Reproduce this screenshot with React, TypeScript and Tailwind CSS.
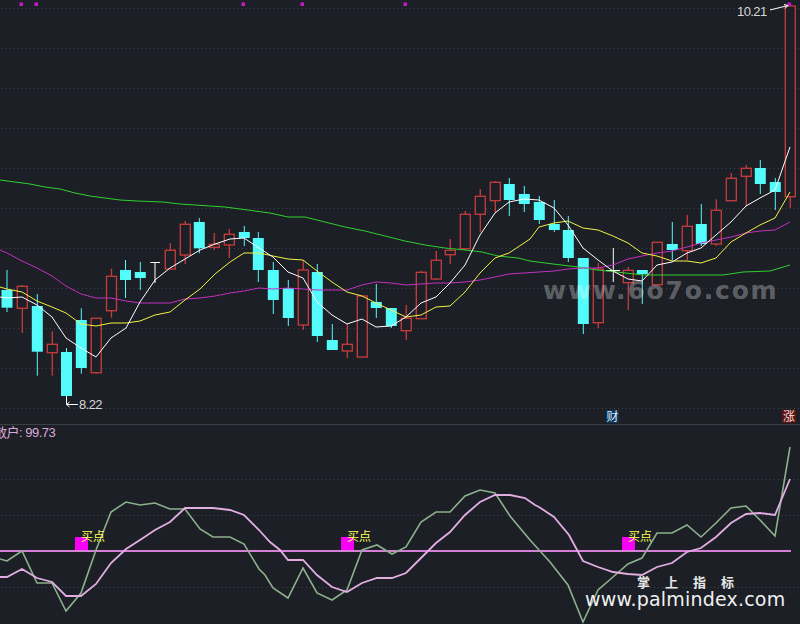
import React from "react";

type Candle = [number, number, number, number, number, "r" | "c"];

const candles: Candle[] = [
  [7, 270, 290, 307.7, 312, "c"],
  [22.3, 285, 286.3, 308.3, 333, "r"],
  [37.3, 294, 306, 351.7, 375.7, "c"],
  [52.3, 331.3, 344.3, 352.7, 375.7, "r"],
  [66.5, 348, 352, 396, 404, "c"],
  [81.3, 308.3, 320, 368, 373.7, "c"],
  [96.2, 318.3, 318.3, 372.7, 373.7, "r"],
  [111.5, 268.7, 276.3, 310.7, 317.7, "r"],
  [125.5, 260, 270, 280, 298, "c"],
  [140.3, 262, 272, 278, 290, "c"],
  [170.3, 243, 250.3, 269, 269, "r"],
  [185.3, 221, 224.3, 255, 264, "r"],
  [199.3, 218, 222, 248.3, 253.3, "c"],
  [214.3, 233, 244.3, 247.3, 250, "r"],
  [229.3, 229, 234.3, 245, 258, "r"],
  [244.3, 226, 232, 238, 246, "c"],
  [258.3, 232, 238, 270, 282, "c"],
  [273.3, 262, 270, 300, 314, "c"],
  [288.3, 280, 288, 318, 326, "c"],
  [303.3, 260, 270, 325, 330, "r"],
  [317.3, 264, 272, 336, 342, "c"],
  [332.3, 324, 340, 350, 350, "c"],
  [347.3, 324, 344.3, 351, 358, "r"],
  [362.3, 296, 296, 357, 357, "r"],
  [376.3, 284, 302, 308, 318, "c"],
  [391.3, 308, 308, 326, 328, "c"],
  [406.3, 305, 318.3, 330.7, 340, "r"],
  [421.3, 271, 272.3, 318.7, 319, "r"],
  [436.3, 251, 260.3, 279, 280, "r"],
  [450.3, 239, 250.3, 254.7, 264, "r"],
  [465.3, 211, 214.3, 248.7, 250, "r"],
  [480.3, 189, 196.3, 214.3, 232, "r"],
  [495.3, 181, 182.3, 200.7, 212, "r"],
  [509.3, 178, 184, 200, 216, "c"],
  [524.3, 186, 194, 204, 212, "c"],
  [539.3, 196, 202, 220, 224, "c"],
  [554.3, 200, 224, 230, 232, "c"],
  [568.3, 216, 230, 258, 262, "c"],
  [583.3, 258, 258, 324, 334, "c"],
  [598.3, 263, 269, 322.7, 328, "r"],
  [628.3, 267, 270.3, 282.7, 310, "r"],
  [642.3, 270, 270, 274, 304, "c"],
  [657.3, 242, 242.3, 284.7, 285, "r"],
  [672.3, 222, 244, 250, 260, "c"],
  [687.3, 215, 226.3, 250.7, 260, "r"],
  [701.3, 204, 224, 244, 246, "c"],
  [716.3, 199.3, 210.3, 244, 246, "r"],
  [731.3, 173, 178.3, 200.7, 201, "r"],
  [746.3, 165, 168.3, 176.3, 206, "r"],
  [760.3, 160, 168, 184, 194, "c"],
  [775.3, 178, 182, 192, 210, "c"],
  [790.3, 5, 6, 196.7, 208, "r"],
];

const white =
  "0,297 7,298 22,297 37,305 52,317 66,338 81,348 96,357 111,338 126,328 140,302 155,280 170,268 185,259 200,250 215,244 230,239 244,238 259,248 273,257 288,272 303,278 317,302 332,315 347,324 362,319 376,327 391,326 406,317 421,303 436,297 450,283 465,265 480,235 495,213 509,202 524,199 539,200 554,208 568,225 583,248 598,260 613,271 628,279 642,281 657,265 672,262 687,253 701,248 716,235 731,222 746,206 760,198 775,190 790,147";
const yellow =
  "0,287 7,289 22,292 37,301 52,307 66,313 81,324 96,326 111,323 126,323 140,321 155,315 170,312 185,300 200,289 215,274 230,262 244,253 259,253 273,256 288,259 303,260 317,271 332,282 347,292 362,296 376,303 391,310 406,317 421,315 436,307 450,306 465,292 480,273 495,258 509,253 524,243 530,239 539,227 554,223 568,221 583,228 598,230 613,236 628,243 642,253 657,256 672,261 687,261 701,263 716,258 731,242 746,233 760,225 775,218 790,192";
const magenta =
  "0,250 7,253 22,261 37,268 52,276 66,286 81,294 96,298 111,298 126,301 140,303 155,303 170,303 185,299 200,298 215,296 230,293 244,291 259,288 273,289 288,288 303,289 317,290 332,290 347,290 362,285 376,282 391,283 406,285 421,284 436,283 450,283 465,282 480,280 495,277 509,274 524,273 539,272 554,271 568,269 583,268 598,268 613,265 628,259 642,256 657,253 672,251 687,247 701,243 716,240 731,237 746,233 760,231 775,230 790,222";
const green =
  "0,180 15,182 30,184 45,187 60,189 75,193 90,196 105,198 120,200 137,201 163,202 180,204 195,205 210,206 225,207 240,209 255,211 270,213 288,217 305,217 325,222 345,227 365,231 385,236 405,241 425,245 445,248 465,250 482,252 498,256 518,258 530,261 553,264 578,267 597,270 617,272 643,275 673,275 697,275 723,275 743,272 770,271 790,265";

const oscGreen =
  "0,559 7,561 22,551 37,583 52,583 66,611 81,593 96,550 111,512 126,502 140,505 155,503 170,509 185,509 200,529 213,537 230,537 244,544 259,569 265,575 273,588 288,598 303,568 317,593 332,600 347,590 362,550 377,545 392,554 406,547 421,522 436,512 450,512 465,496 480,490 495,493 510,516 525,534 530,540 550,562 568,585 583,622 598,590 613,577 628,564 642,558 657,533 672,533 687,525 701,537 716,523 731,508 746,506 760,520 775,536 790,447";
const oscPink =
  "0,577 7,577 22,569 37,578 52,582 66,596 81,596 96,584 111,563 126,549 140,540 155,530 170,522 185,508 213,508 230,510 244,515 259,530 270,542 280,550 288,560 303,560 317,575 332,587 347,592 362,583 377,578 392,578 406,573 421,558 436,543 450,532 465,515 480,502 495,495 510,495 525,498 535,505 539,507 554,517 569,535 583,561 598,567 613,572 628,574 642,575 657,567 672,563 687,552 701,548 716,537 731,523 746,514 760,513 775,515 790,479";

const gridMain = [8, 48, 88, 128, 168, 208, 248, 288, 328, 368, 408];
const gridOsc = [479, 515, 587];
const pins = [21, 36, 243, 302, 405, 789];
const buys = [75, 341, 622];

function Dotted({ y }: { y: number }) {
  return (
    <line x1={2} x2={800} y1={y + 0.5} y2={y + 0.5} stroke="#3f434b" strokeWidth={1} strokeDasharray="1 3" shapeRendering="crispEdges" />
  );
}

function CandleMark({ c }: { c: Candle }) {
  const [x, wt, bt, bb, wb, kind] = c;
  const col = kind === "r" ? "#c83c3c" : "#54fbfb";
  if (kind === "r") {
    return (
      <g>
        <line x1={x} x2={x} y1={wt} y2={wb} stroke={col} strokeWidth={1.3} />
        <rect x={x - 5} y={bt} width={10} height={bb - bt} fill="#1c1f26" stroke={col} strokeWidth={1.3} />
      </g>
    );
  }
  return (
    <g>
      <line x1={x} x2={x} y1={wt} y2={wb} stroke={col} strokeWidth={1} />
      <rect x={x - 5.5} y={bt} width={11} height={bb - bt} fill={col} />
    </g>
  );
}

export default function App() {
  return (
    <div className="w-[800px] h-[624px] bg-[#1c1f26] flex flex-col overflow-hidden font-['Liberation_Sans','Noto_Sans_CJK_SC',sans-serif]">
      <div className="relative h-[424px] shrink-0">
        <svg className="block" width={800} height={424} viewBox="0 0 800 424">
          {gridMain.map((y) => (
            <Dotted key={y} y={y} />
          ))}
          {candles.map((c) => (
            <CandleMark key={c[0]} c={c} />
          ))}
          <path d="M155 262.5V283M150.3 262.5H160" stroke="#ffffff" strokeWidth={1} fill="none" />
          <path d="M613.3 248V282M606 270.5H620" stroke="#ffffff" strokeWidth={1} fill="none" />
          <polyline points={green} fill="none" stroke="#2fd02f" strokeWidth={1} />
          <polyline points={magenta} fill="none" stroke="#c030c0" strokeWidth={1} />
          <polyline points={yellow} fill="none" stroke="#f2f245" strokeWidth={1} />
          <polyline points={white} fill="none" stroke="#ffffff" strokeWidth={1} />
          {pins.map((x) => (
            <rect key={x} x={x - 1.5} y={2.5} width={3.5} height={3.5} fill="#c617c6" />
          ))}
          <path d="M770 10L788 5.5M784 4.5L788 5.5L785 8.5" stroke="#ffffff" strokeWidth={1} fill="none" />
          <path d="M66.5 396V404.5H78M66.5 404.5L69.5 402M66.5 404.5L69.5 407" stroke="#ffffff" strokeWidth={1} fill="none" />
          <text x={737} y={16} className="text-[13px] tracking-[-0.6px] fill-[#d8d8d8]">10.21</text>
          <text x={79} y={409} className="text-[13px] tracking-[-0.6px] fill-[#d8d8d8]">8.22</text>
          <rect x={606} y={410} width={13} height={13} fill="#0e3557" />
          <text x={612.5} y={421} textAnchor="middle" className="text-[12px] fill-[#d5ecff]">财</text>
          <rect x={782} y={410} width={14} height={13} fill="#5c1212" />
          <text x={789} y={421} textAnchor="middle" className="text-[12px] fill-[#f3dcdc]">涨</text>
        </svg>
        <span className="absolute left-[543px] top-[277px] text-[25px] leading-[28px] font-bold tracking-[1.8px] text-white/30 whitespace-nowrap font-['DejaVu_Sans',sans-serif]">
          www.6o7o.com
        </span>
      </div>
      <div className="relative flex-1 border-t border-[#3b3f47]">
        <svg className="block" width={800} height={199} viewBox="0 425 800 199">
          {gridOsc.map((y) => (
            <Dotted key={y} y={y} />
          ))}
          {buys.map((x) => (
            <rect key={x} x={x} y={537} width={13} height={14} fill="#f600f6" />
          ))}
          <line x1={0} x2={791} y1={551} y2={551} stroke="#d67fd6" strokeWidth={2} />
          <polyline points={oscGreen} fill="none" stroke="#8db08d" strokeWidth={1.6} />
          <polyline points={oscPink} fill="none" stroke="#e2aee2" strokeWidth={1.8} />
          <text x={-6} y={437} className="text-[13px] tracking-[-0.5px] fill-[#d9a9d9]">散户: 99.73</text>
          {buys.map((x) => (
            <text key={x} x={x + 6} y={541} className="text-[12px] fill-[#ffff55]">买点</text>
          ))}
        </svg>
        <div className="absolute left-[585px] top-[150px] flex flex-col items-start">
          <span className="ml-[52px] text-[13px] leading-[16px] font-bold tracking-[15px] text-[#e8e8e8] whitespace-nowrap">掌上指标</span>
          <span className="text-[19px] leading-[16px] tracking-[0.2px] text-[#f0f0f0] whitespace-nowrap font-['DejaVu_Sans',sans-serif]">
            www.palmindex.com
          </span>
        </div>
      </div>
    </div>
  );
}
